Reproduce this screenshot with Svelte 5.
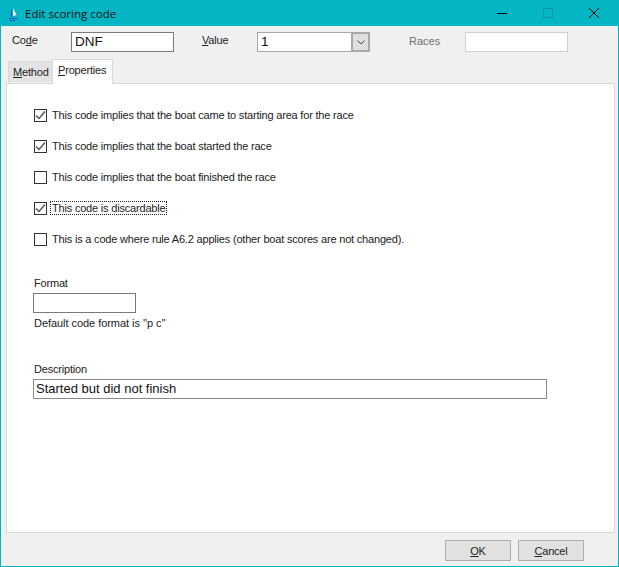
<script>
  const checks = [
    { text: 'This code implies that the boat came to starting area for the race', on: true },
    { text: 'This code implies that the boat started the race', on: true },
    { text: 'This code implies that the boat finished the race', on: false },
    { text: 'This code is discardable', on: true, focus: true },
    { text: 'This is a code where rule A6.2 applies (other boat scores are not changed).', on: false }
  ];
</script>

<div class="window">
  <header class="titlebar">
    <svg class="appicon" width="16" height="16" viewBox="0 0 16 16">
      <path d="M7 1 L7 12 L6 12 Z" fill="#1a2fd0" />
      <path d="M8 3 L11.5 10 L8 11 Z" fill="#ffffff" />
      <path d="M4 13.5 H12 M5 15.5 H11" stroke="#2233cc" stroke-width="1" stroke-dasharray="2 1" />
    </svg>
    <span class="title">Edit scoring code</span>
    <div class="controls">
      <svg class="ctl" width="46" height="26" viewBox="0 0 46 26"><path d="M18 13.5 H28" stroke="#000" /></svg>
      <svg class="ctl" width="46" height="26" viewBox="0 0 46 26"><rect x="18.5" y="8.5" width="9" height="9" fill="none" stroke="#0a93a1" /></svg>
      <svg class="ctl" width="46" height="26" viewBox="0 0 46 26"><path d="M18 8 L28 18 M28 8 L18 18" stroke="#000" fill="none" /></svg>
    </div>
  </header>

  <div class="fields">
    <label class="lab lab-code" for="code">Co<u>d</u>e</label>
    <div class="box code" id="code">DNF</div>
    <span class="lab lab-value"><u>V</u>alue</span>
    <div class="combo">
      <span class="combo-text">1</span>
      <span class="combo-btn">
        <svg width="8" height="5" viewBox="0 0 8 5"><path d="M0.5 0.5 L4 4 L7.5 0.5" fill="none" stroke="#444" /></svg>
      </span>
    </div>
    <span class="lab lab-races">Races</span>
    <div class="box races"></div>
  </div>

  <div class="tabs">
    <div class="tab method"><u>M</u>ethod</div>
    <div class="tab active"><u>P</u>roperties</div>
  </div>

  <main class="panel">
    <div class="checks">
      {#each checks as c}
        <div class="check">
          <span class="cb">
            {#if c.on}
              <svg width="11" height="11" viewBox="0 0 11 11"><path d="M1 5.5 L4 8.5 L10 1.5" fill="none" stroke="#555" stroke-width="1.5" /></svg>
            {/if}
          </span>
          <span class="check-text" class:focus={c.focus}>{c.text}</span>
        </div>
      {/each}
    </div>

    <div class="lab block format-lab">Format</div>
    <div class="box format"></div>
    <div class="lab block hint">Default code format is ''p c''</div>

    <div class="lab block desc-lab">Description</div>
    <div class="box desc">Started but did not finish</div>
  </main>

  <footer class="footer">
    <button class="btn"><u>O</u>K</button>
    <button class="btn"><u>C</u>ancel</button>
  </footer>
</div>

<style>
  :global(body) {
    margin: 0;
    background: #f0f0f0;
  }
  .window {
    width: 619px;
    height: 567px;
    box-sizing: border-box;
    display: flex;
    flex-direction: column;
    background: #f0f0f0;
    border: 1px solid #04b4c2;
    border-top: none;
    font-family: "Liberation Sans", Arial, sans-serif;
    font-size: 11px;
    letter-spacing: -0.19px;
    color: #222;
  }
  .titlebar {
    height: 26px;
    flex: none;
    margin: 0 -1px;
    background: #04b6c3;
    display: flex;
    align-items: center;
    padding-left: 5px;
  }
  .appicon { flex: none; }
  .title {
    margin-left: 4px;
    font-family: "Open Sans", sans-serif;
    font-size: 11.5px;
    letter-spacing: 0;
    color: #111;
  }
  .controls {
    margin-left: auto;
    display: flex;
    margin-right: 2px;
  }
  .ctl { display: block; }
  .fields {
    flex: none;
    height: 20px;
    margin-top: 6px;
    display: flex;
    align-items: center;
    position: relative;
  }
  .lab { color: #222; }
  .lab-code { margin-left: 11px; width: 59px; margin-top: -5px; }
  .box {
    box-sizing: border-box;
    background: #fff;
    border: 1px solid #7a7a7a;
    font-size: 13.5px;
    letter-spacing: 0;
    line-height: 18px;
    padding-left: 3px;
    color: #111;
  }
  .code { width: 103px; height: 20px; }
  .lab-value { margin-left: 28px; width: 55px; margin-top: -5px; }
  .combo {
    box-sizing: border-box;
    width: 113px;
    height: 20px;
    display: flex;
    background: #fff;
    border: 1px solid #a8a8a8;
    border-right: none;
  }
  .combo-text {
    flex: 1;
    font-size: 13.5px;
    letter-spacing: 0;
    line-height: 18px;
    padding-left: 3px;
    color: #111;
  }
  .combo-btn {
    box-sizing: border-box;
    width: 19px;
    height: 20px;
    margin-top: -1px;
    background: #dfdfdf;
    border: 2px solid #a8a8a8;
    display: flex;
    align-items: center;
    justify-content: center;
  }
  .lab-races { margin-left: 39px; width: 56px; color: #6d6d6d; letter-spacing: 0; margin-top: -2px; }
  .races { width: 103px; height: 20px; border-color: #cfcfcf; }
  .tabs {
    flex: none;
    height: 25px;
    margin-top: 6px;
    display: flex;
    align-items: flex-end;
    padding-left: 7px;
    position: relative;
    z-index: 1;
  }
  .tab {
    box-sizing: border-box;
    border: 1px solid #d9d9d9;
    border-bottom: none;
  }
  .method {
    width: 44px;
    height: 21px;
    margin-bottom: 1px;
    background: #e3e3e3;
    line-height: 21px;
    padding-left: 4px;
    border-right: none;
  }
  .active {
    width: 61px;
    height: 25px;
    background: #fff;
    line-height: 21px;
    padding-left: 5px;
    margin-bottom: -1px;
  }
  .panel {
    flex: 1;
    margin: 0 3px 0 5px;
    background: #fff;
    border: 1px solid #d9d9d9;
    padding: 0 0 0 26px;
    min-height: 0;
  }
  .checks {
    padding-top: 24px;
    display: flex;
    flex-direction: column;
    gap: 17px;
  }
  .check {
    display: flex;
    align-items: center;
    height: 14px;
    margin-left: 1px;
  }
  .cb {
    box-sizing: border-box;
    width: 13px;
    height: 13px;
    border: 1px solid #333;
    background: #fff;
    display: flex;
    align-items: center;
    justify-content: center;
    flex: none;
  }
  .check-text {
    margin-left: 4px;
    padding: 0 1px;
    outline: 1px solid transparent;
  }
  .check-text.focus { outline: 1px dotted #222; outline-offset: 0; }
  .block { line-height: 14px; }
  .format-lab { margin-top: 30px; margin-left: 1px; }
  .format { width: 103px; height: 20px; margin-top: 3px; }
  .hint { margin-top: 3px; margin-left: 1px; letter-spacing: -0.05px; }
  .desc-lab { margin-top: 32px; margin-left: 1px; }
  .desc { width: 514px; height: 20px; margin-top: 3px; padding-left: 2px; font-size: 13px; border-color: #8a8a8a; }
  .footer {
    flex: none;
    height: 33px;
    display: flex;
    justify-content: flex-end;
    gap: 7px;
    padding: 7px 34px 0 0;
    box-sizing: border-box;
  }
  .btn {
    width: 66px;
    height: 21px;
    box-sizing: border-box;
    background: #e1e1e1;
    border: 1px solid #adadad;
    border-radius: 0;
    font: inherit;
    letter-spacing: inherit;
    color: #222;
    padding: 0;
  }
</style>
